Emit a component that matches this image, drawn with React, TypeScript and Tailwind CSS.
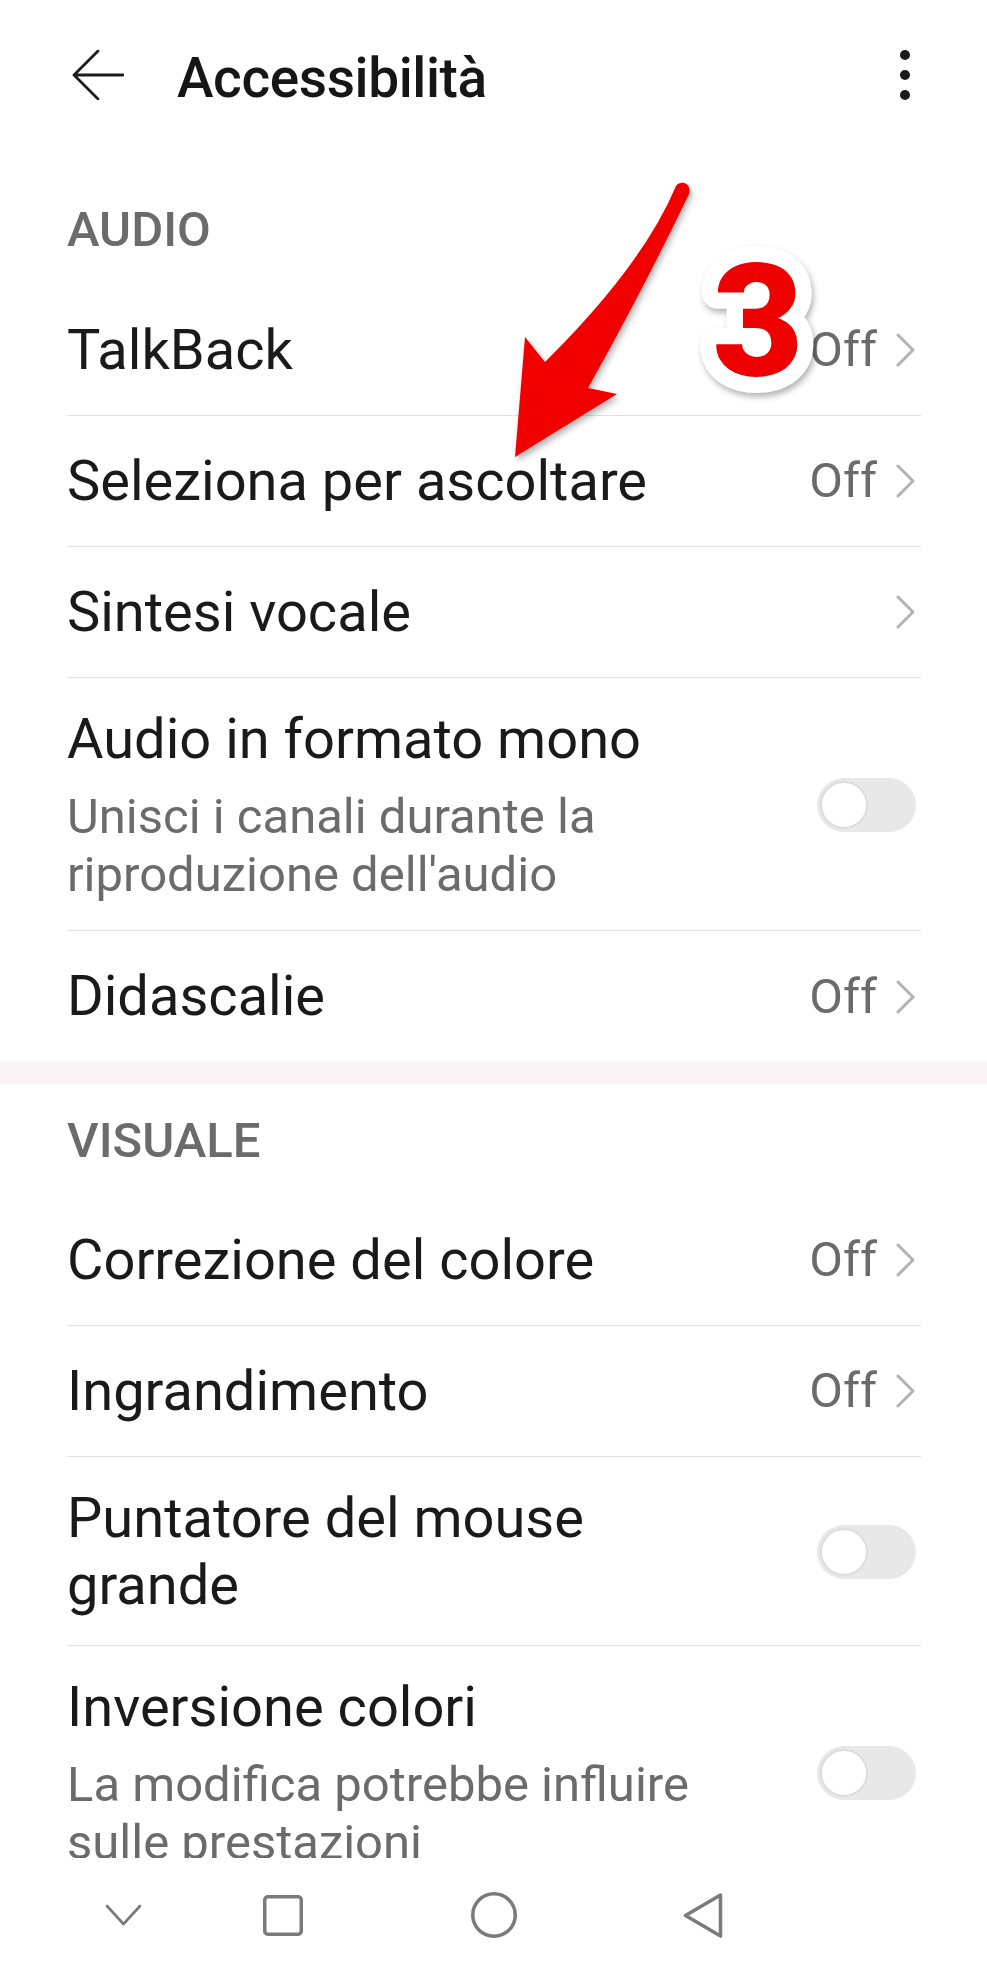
import React from 'react';

type RowProps = { label: string; value?: string; last?: boolean };

function Chevron() {
  return (
    <svg width="26" height="34" viewBox="0 0 26 34" className="shrink-0">
      <path d="M3 2 L18 17 L3 32" fill="none" stroke="#b3b3b3" strokeWidth="3" strokeLinecap="round" strokeLinejoin="round" />
    </svg>
  );
}

function Toggle() {
  return (
    <div className="w-[99px] h-[54px] rounded-full bg-[#e8e8e8] p-[3px] flex items-center shrink-0 mr-[5px]">
      <div className="w-[48px] h-[48px] rounded-full bg-white border-2 border-[#dcdcdc]" />
    </div>
  );
}

// simple row: label on the left, "Off" + chevron on the right
function LinkRow({ label, value, last }: RowProps) {
  return (
    <div className={`flex items-center h-[131px] ${last ? 'h-[130px]' : 'border-b border-[#e2e2e2]'}`}>
      <div className="flex-1 text-[56px] leading-[67px] text-[#1a1a1a]">{label}</div>
      <div className="flex items-center gap-[18px]">
        {value && <span className="text-[49px] leading-[58px] text-[#6b6b6b]">{value}</span>}
        <Chevron />
      </div>
    </div>
  );
}

function ToggleRow({ title, subtitle, last }: { title: React.ReactNode; subtitle?: React.ReactNode; last?: boolean }) {
  return (
    <div className={`flex items-center pt-[28px] pb-[26px] ${last ? '' : 'border-b border-[#e2e2e2]'}`}>
      <div className="flex-1 pr-[40px]">
        <div className="text-[56px] leading-[67px] text-[#1a1a1a]">{title}</div>
        {subtitle && <div className="mt-[15px] text-[49px] leading-[58px] text-[#6b6b6b]">{subtitle}</div>}
      </div>
      <Toggle />
    </div>
  );
}

function SectionTitle({ children, top }: { children: React.ReactNode; top: string }) {
  return (
    <div className={`pl-[67px] ${top} pb-[25px] text-[49px] leading-[58px] font-medium text-[#6b6b6b]`}>{children}</div>
  );
}

export default function App() {
  return (
    <div className="w-[987px] h-[1972px] bg-white relative flex flex-col overflow-hidden font-['Roboto',sans-serif]">
      <div className="h-[1858px] overflow-hidden shrink-0">
        {/* Top bar */}
        <div className="h-[150px] flex items-center pl-[72px] pr-[77px]">
          <svg width="52" height="50" viewBox="0 0 52 50" className="shrink-0">
            <path d="M51 25 H2 M26 1 L2 25 L26 49" fill="none" stroke="#1c1c1c" strokeWidth="2.8" strokeLinecap="round" strokeLinejoin="round" />
          </svg>
          <div className="ml-[53px] pt-[6px] flex-1 text-[55px] leading-[67px] tracking-[-0.4px] font-medium text-[#161616]">Accessibilità</div>
          <svg width="10" height="50" viewBox="0 0 10 50" className="shrink-0">
            <circle cx="5" cy="5" r="5" fill="#1c1c1c" />
            <circle cx="5" cy="25" r="5" fill="#1c1c1c" />
            <circle cx="5" cy="45" r="5" fill="#1c1c1c" />
          </svg>
        </div>

        <div className="pl-[67px] pt-[51px] pb-[26px] text-[49px] leading-[58px] font-medium text-[#6b6b6b]">AUDIO</div>
        <div className="pl-[67px] pr-[66px]">
          <LinkRow label="TalkBack" value="Off" />
          <LinkRow label="Seleziona per ascoltare" value="Off" />
          <LinkRow label="Sintesi vocale" />
          <ToggleRow title="Audio in formato mono" subtitle={<>Unisci i canali durante la<br />riproduzione dell'audio</>} />
          <LinkRow label="Didascalie" value="Off" last />
        </div>

        <div className="h-[22px] bg-[#fbf3f5] border-t-[3px] border-[#f6f4f6]" />

        <SectionTitle top="pt-[28px]">VISUALE</SectionTitle>
        <div className="pl-[67px] pr-[66px]">
          <LinkRow label="Correzione del colore" value="Off" />
          <LinkRow label="Ingrandimento" value="Off" />
          <ToggleRow title={<>Puntatore del mouse<br />grande</>} />
          <ToggleRow title="Inversione colori" subtitle={<>La modifica potrebbe influire<br />sulle prestazioni</>} last />
        </div>
      </div>

      {/* Navigation bar */}
      <div className="h-[114px] flex items-center bg-white">
        <svg width="38" height="24" viewBox="0 0 38 24" className="ml-[105px] shrink-0">
          <path d="M2 3 L18.5 21 L35 3" fill="none" stroke="#7a7a7a" strokeWidth="2.6" strokeLinecap="round" strokeLinejoin="round" />
        </svg>
        <svg width="40" height="41" viewBox="0 0 40 41" className="ml-[120px] shrink-0">
          <rect x="1.75" y="1.75" width="36.5" height="37.5" rx="3" fill="none" stroke="#7a7a7a" strokeWidth="3.5" />
        </svg>
        <svg width="46" height="46" viewBox="0 0 46 46" className="ml-[168px] shrink-0">
          <circle cx="23" cy="23" r="21.25" fill="none" stroke="#7a7a7a" strokeWidth="3.5" />
        </svg>
        <svg width="40" height="45" viewBox="0 0 40 45" className="ml-[166px] shrink-0">
          <path d="M37.5 2 L2.5 22.5 L37.5 43 Z" fill="none" stroke="#7a7a7a" strokeWidth="3.5" strokeLinejoin="round" />
        </svg>
      </div>

      {/* Annotation overlay: red arrow + step number */}
      <svg width="987" height="1972" viewBox="0 0 987 1972" className="absolute inset-0 pointer-events-none">
        <defs>
          <filter id="shadow" x="-20%" y="-20%" width="140%" height="140%">
            <feDropShadow dx="2" dy="4" stdDeviation="3" floodColor="#000" floodOpacity="0.3" />
          </filter>
        </defs>
        <path
          d="M676 186 C680 180 692 182 689 194 Q642 292 588 388 L617 394 L515 457 L525 337 L545 362 Q643 265 676 186 Z"
          fill="#f20000"
          filter="url(#shadow)"
        />
        <text
          x="758"
          y="375"
          textAnchor="middle"
          fontFamily="Roboto, 'Liberation Sans', sans-serif"
          fontWeight="900"
          fontSize="157"
          fill="#ee0000"
          stroke="#ffffff"
          strokeWidth="32"
          strokeLinejoin="round"
          paintOrder="stroke"
          filter="url(#shadow)"
        >
          3
        </text>
      </svg>
    </div>
  );
}
